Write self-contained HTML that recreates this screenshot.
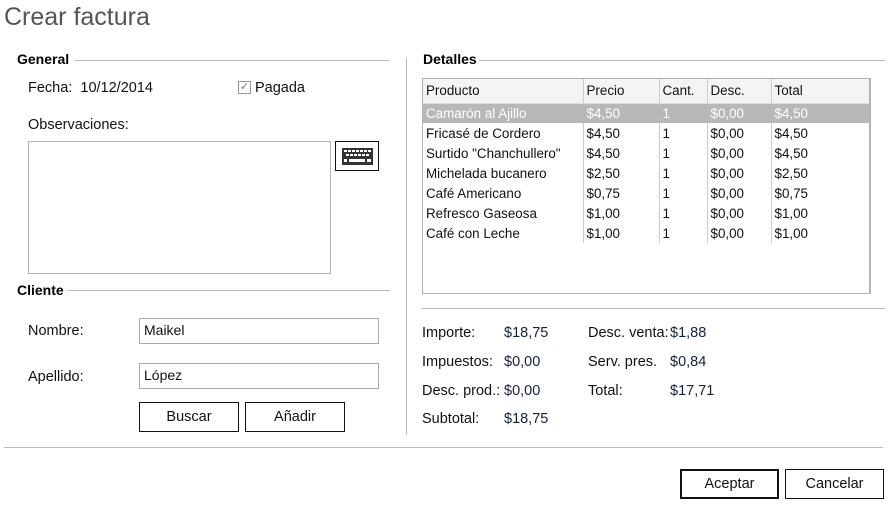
<!DOCTYPE html>
<html><head><meta charset="utf-8"><style>
*{margin:0;padding:0;box-sizing:border-box}
body{width:894px;height:507px;background:#fff;font-family:"Liberation Sans",sans-serif;font-size:14.5px;color:#111;position:relative;overflow:hidden}
.a{position:absolute;white-space:nowrap}
.h{font-weight:bold;font-size:14px;color:#000}
.ln{position:absolute;background:#bcbcbc;height:1px}
.inp{position:absolute;border:1px solid #aaa;background:#fff;padding:3px 4px;font-size:14px}
.btn{position:absolute;border:1px solid #111;background:#fff;text-align:center;font-size:14.5px;line-height:28px}
table{border-collapse:collapse;font-size:13.4px}
td{height:20px;padding:0 3px;border-left:1px solid #ccc;color:#111}
td:first-child{border-left:none}
th{font-weight:normal;text-align:left;height:24px;padding:0 3px;background:#f4f4f4;border-left:1px solid #ccc;border-bottom:1px solid #ddd}
th:first-child{border-left:none}
tr.sel td{background:#b8b8b8;color:#fff;border-left-color:#b8b8b8}
.v{color:#142040}
</style></head><body>
<div class="a" style="left:4px;top:3px;font-size:25px;color:#555">Crear factura</div>

<div class="a h" style="left:17px;top:51px">General</div>
<div class="ln" style="left:74px;top:60px;width:316px"></div>
<div class="a" style="left:28px;top:80px">Fecha:&nbsp; 10/12/2014</div>
<div class="a" style="left:238px;top:81px;width:13px;height:13px;border:1px solid #999;font-size:11px;line-height:11px;text-align:center;color:#777">✓</div>
<div class="a" style="left:255px;top:80px">Pagada</div>
<div class="a" style="left:28px;top:117px">Observaciones:</div>
<div class="a" style="left:28px;top:141px;width:303px;height:133px;border:1px solid #b4b4b4"></div>
<div class="a" style="left:335px;top:141px;width:44px;height:30px;border:1px solid #111">
<svg width="42" height="28" viewBox="0 0 42 28"><rect x="6" y="6" width="31" height="17" fill="#333"/>
<g fill="#fff"><rect x="8" y="8" width="3" height="2"/><rect x="12" y="8" width="3" height="2"/><rect x="16" y="8" width="3" height="2"/><rect x="20" y="8" width="3" height="2"/><rect x="24" y="8" width="3" height="2"/><rect x="28" y="8" width="3" height="2"/><rect x="32" y="8" width="3" height="2"/>
<rect x="10" y="12" width="3" height="2"/><rect x="14" y="12" width="3" height="2"/><rect x="18" y="12" width="3" height="2"/><rect x="22" y="12" width="3" height="2"/><rect x="26" y="12" width="3" height="2"/><rect x="30" y="12" width="3" height="2"/>
<rect x="8" y="17" width="3" height="3"/><rect x="13" y="17" width="16" height="3"/><rect x="31" y="17" width="4" height="3"/></g></svg></div>

<div class="a h" style="left:17px;top:282px">Cliente</div>
<div class="ln" style="left:67px;top:290px;width:323px"></div>
<div class="a" style="left:28px;top:323px">Nombre:</div>
<div class="inp" style="left:139px;top:318px;width:240px;height:26px">Maikel</div>
<div class="a" style="left:28px;top:369px">Apellido:</div>
<div class="inp" style="left:139px;top:363px;width:240px;height:26px">López</div>
<div class="btn" style="left:139px;top:402px;width:100px;height:30px">Buscar</div>
<div class="btn" style="left:245px;top:402px;width:100px;height:30px">Añadir</div>

<div class="a" style="left:406px;top:58px;width:1px;height:377px;background:#bcbcbc"></div>

<div class="a h" style="left:423px;top:51px">Detalles</div>
<div class="ln" style="left:479px;top:60px;width:406px"></div>
<div class="a" style="left:422px;top:78px;width:449px;height:216px;border:1px solid #b4b4b4;border-right-width:2px;overflow:hidden">
<table style="width:447px">
<tr><th style="width:160px">Producto</th><th style="width:76px">Precio</th><th style="width:48px">Cant.</th><th style="width:64px">Desc.</th><th>Total</th></tr>
<tr class="sel"><td>Camarón al Ajillo</td><td>$4,50</td><td>1</td><td>$0,00</td><td>$4,50</td></tr>
<tr><td>Fricasé de Cordero</td><td>$4,50</td><td>1</td><td>$0,00</td><td>$4,50</td></tr>
<tr><td>Surtido "Chanchullero"</td><td>$4,50</td><td>1</td><td>$0,00</td><td>$4,50</td></tr>
<tr><td>Michelada bucanero</td><td>$2,50</td><td>1</td><td>$0,00</td><td>$2,50</td></tr>
<tr><td>Café Americano</td><td>$0,75</td><td>1</td><td>$0,00</td><td>$0,75</td></tr>
<tr><td>Refresco Gaseosa</td><td>$1,00</td><td>1</td><td>$0,00</td><td>$1,00</td></tr>
<tr><td>Café con Leche</td><td>$1,00</td><td>1</td><td>$0,00</td><td>$1,00</td></tr>
</table></div>
<div class="ln" style="left:422px;top:308px;width:463px"></div>

<div class="a" style="left:422px;top:325px">Importe:</div><div class="a v" style="left:504px;top:325px">$18,75</div>
<div class="a" style="left:422px;top:354px">Impuestos:</div><div class="a v" style="left:504px;top:354px">$0,00</div>
<div class="a" style="left:422px;top:383px">Desc. prod.:</div><div class="a v" style="left:504px;top:383px">$0,00</div>
<div class="a" style="left:422px;top:411px">Subtotal:</div><div class="a v" style="left:504px;top:411px">$18,75</div>
<div class="a" style="left:588px;top:325px">Desc. venta:</div><div class="a v" style="left:670px;top:325px">$1,88</div>
<div class="a" style="left:588px;top:354px">Serv. pres.</div><div class="a v" style="left:670px;top:354px">$0,84</div>
<div class="a" style="left:588px;top:383px">Total:</div><div class="a v" style="left:670px;top:383px">$17,71</div>

<div class="ln" style="left:4px;top:447px;width:879px"></div>
<div class="btn" style="left:680px;top:469px;width:99px;height:30px;border-width:2px;line-height:26px">Aceptar</div>
<div class="btn" style="left:785px;top:469px;width:99px;height:30px">Cancelar</div>
</body></html>
